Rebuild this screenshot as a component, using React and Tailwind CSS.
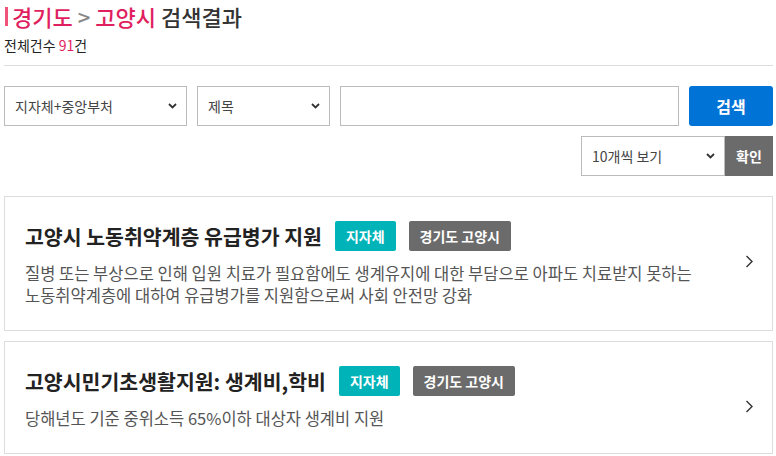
import React from 'react';

const FONT = { fontFamily: '"Noto Sans CJK KR", "Noto Sans", sans-serif' };

const items = [
  {
    title: '고양시 노동취약계층 유급병가 지원',
    desc: '질병 또는 부상으로 인해 입원 치료가 필요함에도 생계유지에 대한 부담으로 아파도 치료받지 못하는 노동취약계층에 대하여 유급병가를 지원함으로써 사회 안전망 강화',
  },
  {
    title: '고양시민기초생활지원: 생계비,학비',
    desc: '당해년도 기준 중위소득 65%이하 대상자 생계비 지원',
  },
];

function SelectArrow() {
  return (
    <svg width="9" height="6" viewBox="0 0 9 6" className="shrink-0">
      <path d="M1 1 L4.5 4.5 L8 1" fill="none" stroke="#333" strokeWidth="1.8" />
    </svg>
  );
}

function FakeSelect({ label, className }) {
  return (
    <div
      className={`flex h-[40px] items-center justify-between border border-[#bbb] bg-white pl-[10px] pr-[9px] text-[14px] text-[#444] ${className}`}
    >
      <span>{label}</span>
      <SelectArrow />
    </div>
  );
}

function Chevron() {
  return (
    <svg width="9" height="13" viewBox="0 0 9 13">
      <path d="M1.5 1 L7 6.5 L1.5 12" fill="none" stroke="#333" strokeWidth="1.4" />
    </svg>
  );
}

function ResultCard({ title, desc }) {
  return (
    <div className="flex items-start border border-[#ddd] bg-white pb-[24px] pl-[20px] pr-[18px] pt-[24px]">
      <div className="min-w-0 flex-1">
        <div className="flex h-[30px] items-center gap-[13px]">
          <h3 className="text-[20.5px] font-bold text-[#222]">{title}</h3>
          <span className="flex h-[30px] items-center rounded-[2px] bg-[#00b3b8] px-[11px] text-[14px] font-bold text-white">
            지자체
          </span>
          <span className="flex h-[30px] items-center rounded-[2px] bg-[#6b6b6b] px-[11px] text-[14px] font-bold text-white">
            경기도 고양시
          </span>
        </div>
        <p className="mt-[11px] pr-[40px] text-[16.5px] leading-[22px] text-[#555]">{desc}</p>
      </div>
      <div className="mt-[34px] shrink-0">
        <Chevron />
      </div>
    </div>
  );
}

export default function App() {
  return (
    <div className="min-h-[456px] bg-white pl-[4px] pr-[3px]" style={FONT}>
      <div className="pt-[4px]">
        <h2 className="flex h-[24px] items-center pl-[1px] text-[22px] font-medium leading-[24px] text-[#333]">
          <span className="mr-[4px] inline-block h-[19px] w-[3px] bg-[#f0527a]" />
          <span className="text-[#df1f60]">경기도</span>
          <span className="mx-[5px] text-[#888]">&gt;</span>
          <span className="text-[#df1f60]">고양시</span>
          <span className="ml-[5px]">검색결과</span>
        </h2>
        <p className="mt-[8px] text-[14px] leading-[18px] text-[#222]">
          전체건수 <span className="text-[#df1f60]">91</span>건
        </p>
      </div>

      <div className="mt-[11px] border-b border-[#ddd]" />

      <div className="mt-[20px] flex gap-[10px]">
        <FakeSelect label="지자체+중앙부처" className="w-[183px]" />
        <FakeSelect label="제목" className="w-[133px]" />
        <div className="h-[40px] flex-1 border border-[#bbb] bg-white" />
        <button className="h-[40px] w-[84px] rounded-[3px] bg-[#0073d7] text-[16px] font-bold text-white">
          검색
        </button>
      </div>

      <div className="mt-[10px] flex justify-end">
        <FakeSelect label="10개씩 보기" className="w-[144px]" />
        <button className="h-[40px] w-[48px] bg-[#6b6b6b] text-[14px] font-bold text-white">확인</button>
      </div>

      <div className="mt-[20px] flex flex-col gap-[10px]">
        {items.map((it) => (
          <ResultCard key={it.title} title={it.title} desc={it.desc} />
        ))}
      </div>
    </div>
  );
}
